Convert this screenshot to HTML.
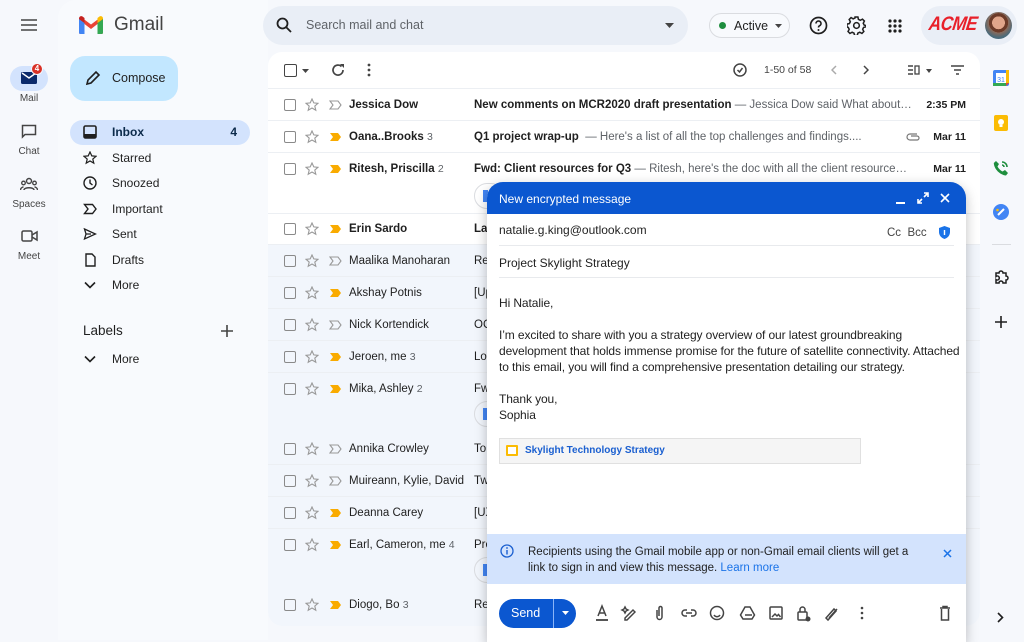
<!DOCTYPE html>
<html><head><meta charset="utf-8"><style>
*{box-sizing:border-box;margin:0;padding:0}
body{width:1024px;height:640px;overflow:hidden;background:#f6f8fc;font-family:"Liberation Sans",Arial,sans-serif;color:#1f1f1f;position:relative}
.a{position:absolute}
.rail{position:absolute;left:0;width:58px;text-align:center;font-size:10px;color:#444}
.menu .it{position:absolute;left:70px;width:180px;height:25px;border-radius:13px;font-size:12px;color:#1f1f1f;line-height:25px;padding-left:42px}
.menu svg{position:absolute;left:13px;top:5px}
.card{position:absolute;left:268px;top:52px;width:712px;height:574px;background:#fff;border-radius:14px;overflow:hidden}
.row{position:absolute;left:0;width:712px;height:32px;border-bottom:1px solid #eceff3;font-size:11.5px;line-height:32px}
.row.rd{background:#f2f6fc}
.cb{position:absolute;left:16px;top:10px;width:12px;height:12px;border:1.6px solid #8a8a8a;border-radius:2px}
.st{position:absolute;left:37px;top:9px}
.imp{position:absolute;left:61px;top:11px}
.nm{position:absolute;left:81px}
.sb{position:absolute;left:206px;white-space:nowrap}
.dt{position:absolute;right:14px;font-weight:bold;font-size:10.5px}
.b{font-weight:bold}
.g{color:#5f6368}
.chip{position:absolute;left:206px;width:30px;height:26px;border:1px solid #dadce0;border-radius:13px}
.chip i{position:absolute;left:8px;top:6px;width:5px;height:12px;background:#4285f4}
.tb svg{position:absolute}
</style></head><body>

<svg class="a" style="left:20px;top:18px" width="18" height="14"><path d="M1 2h16M1 7h16M1 12h16" stroke="#444" stroke-width="1.6"/></svg>
<div class="a" style="left:10px;top:66px;width:38px;height:25px;border-radius:13px;background:#d3e3fd"></div>
<svg class="a" style="left:21px;top:72px" width="16" height="12"><rect x="0" y="0" width="16" height="12" rx="1.5" fill="#0b2a6b"/><path d="M1 1l7 5 7-5" stroke="#fff" stroke-width="1.4" fill="none"/></svg>
<div class="a" style="left:31px;top:63px;width:12px;height:12px;border-radius:6px;background:#d93025;border:1.5px solid #f6f8fc;color:#fff;font-size:8px;line-height:9px;text-align:center;font-weight:bold">4</div>
<div class="rail" style="top:93px">Mail</div>
<svg class="a" style="left:21px;top:124px" width="16" height="15"><path d="M1.5 1.5h13v9H4l-2.5 2.5z" stroke="#444" stroke-width="1.5" fill="none"/></svg>
<div class="rail" style="top:146px">Chat</div>
<svg class="a" style="left:20px;top:177px" width="18" height="14"><circle cx="9" cy="4" r="2.5" stroke="#444" stroke-width="1.4" fill="none"/><circle cx="3.5" cy="6" r="1.8" stroke="#444" stroke-width="1.3" fill="none"/><circle cx="14.5" cy="6" r="1.8" stroke="#444" stroke-width="1.3" fill="none"/><path d="M4 13c0-3 10-3 10 0M0.5 13c0-2 2-3 3-3M17.5 13c0-2-2-3-3-3" stroke="#444" stroke-width="1.4" fill="none"/></svg>
<div class="rail" style="top:199px">Spaces</div>
<svg class="a" style="left:21px;top:230px" width="17" height="12"><rect x="1" y="1" width="10" height="10" rx="1.5" stroke="#444" stroke-width="1.5" fill="none"/><path d="M11 5l5-3v8l-5-3" stroke="#444" stroke-width="1.5" fill="none"/></svg>
<div class="rail" style="top:251px">Meet</div>

<div class="a" style="left:58px;top:0;width:210px;height:640px;background:#f8fafd;border-radius:18px 0 0 0"></div>
<svg class="a" style="left:79px;top:16px" width="24" height="18" viewBox="0 0 24 18"><path d="M0 3v13.5A1.5 1.5 0 0 0 1.5 18H5.5V8l6.5 5 6.5-5v10h4A1.5 1.5 0 0 0 24 16.5V3l-2-2-10 7.5L2 1z" fill="#ea4335"/><path d="M0 3v13.5A1.5 1.5 0 0 0 1.5 18H5.5V7z" fill="#4285f4"/><path d="M18.5 7v11h4A1.5 1.5 0 0 0 24 16.5V3z" fill="#34a853"/><path d="M24 3V2.5C24 .6 21.8-.5 20.3.6L18.5 2v5z" fill="#fbbc04"/><path d="M0 3v-.5C0 .6 2.2-.5 3.7.6L5.5 2v5z" fill="#c5221f"/></svg>
<div class="a" style="left:114px;top:14px;font-size:19px;color:#444">Gmail</div>
<div class="a" style="left:70px;top:56px;width:108px;height:45px;border-radius:15px;background:#c2e7ff"></div>
<svg class="a" style="left:85px;top:70px" width="16" height="16"><path d="M2 14l1-4 8-8 3 3-8 8z" stroke="#1f1f1f" stroke-width="1.6" fill="none"/></svg>
<div class="a" style="left:112px;top:71px;font-size:12.5px;color:#1f1f1f">Compose</div>
<div class="menu">
<div class="it" style="top:120px;background:#d3e3fd;font-weight:bold;color:#0b2a4a"><svg width="14" height="14"><rect x="1" y="1" width="12" height="12" rx="1.5" stroke="#1f1f1f" stroke-width="1.6" fill="none"/><rect x="1" y="9" width="12" height="4" fill="#1f1f1f"/></svg>Inbox<span style="position:absolute;right:13px">4</span></div>
<div class="it" style="top:146px"><svg width="14" height="14"><path d="M7 1l1.8 3.9 4.2.4-3.2 2.8 1 4.1L7 10l-3.8 2.2 1-4.1L1 5.3l4.2-.4z" stroke="#1f1f1f" stroke-width="1.2" fill="none"/></svg>Starred</div>
<div class="it" style="top:171px"><svg width="14" height="14"><circle cx="7" cy="7" r="6" stroke="#1f1f1f" stroke-width="1.4" fill="none"/><path d="M7 3.5V7l2.5 2" stroke="#1f1f1f" stroke-width="1.4" fill="none"/></svg>Snoozed</div>
<div class="it" style="top:197px"><svg width="14" height="14"><path d="M1.5 2.5h8l3.5 4.5-3.5 4.5h-8l3.5-4.5z" stroke="#1f1f1f" stroke-width="1.4" fill="none"/></svg>Important</div>
<div class="it" style="top:222px"><svg width="14" height="14"><path d="M1.5 2l11 5-11 5 1.5-5z M3 7h5" stroke="#1f1f1f" stroke-width="1.3" fill="none"/></svg>Sent</div>
<div class="it" style="top:248px"><svg width="14" height="14"><path d="M3 1h6l3 3v9H3z" stroke="#1f1f1f" stroke-width="1.4" fill="none"/></svg>Drafts</div>
<div class="it" style="top:273px"><svg width="14" height="14"><path d="M2 4.5l5 5 5-5" stroke="#1f1f1f" stroke-width="1.6" fill="none"/></svg>More</div>
<div class="a" style="left:83px;top:323px;font-size:13.5px;color:#1f1f1f">Labels</div>
<svg class="a" style="left:221px;top:325px" width="12" height="12"><path d="M6 0v12M0 6h12" stroke="#444" stroke-width="1.6"/></svg>
<div class="it" style="top:347px"><svg width="14" height="14"><path d="M2 4.5l5 5 5-5" stroke="#1f1f1f" stroke-width="1.6" fill="none"/></svg>More</div>
</div>

<div class="a" style="left:263px;top:6px;width:425px;height:39px;border-radius:20px;background:#e9eef6"></div>
<svg class="a" style="left:276px;top:17px" width="16" height="16"><circle cx="6.5" cy="6.5" r="5" stroke="#1f1f1f" stroke-width="1.8" fill="none"/><path d="M10.5 10.5l4.5 4.5" stroke="#1f1f1f" stroke-width="1.8"/></svg>
<div class="a" style="left:306px;top:18px;font-size:12.5px;color:#5f6368">Search mail and chat</div>
<svg class="a" style="left:665px;top:23px" width="9" height="5"><path d="M0 0h9L4.5 5z" fill="#444"/></svg>
<div class="a" style="left:709px;top:13px;width:81px;height:25px;border:1px solid #dadce0;border-radius:13px;background:#f8fafd"></div>
<div class="a" style="left:719px;top:22px;width:7px;height:7px;border-radius:4px;background:#1e8e3e"></div>
<div class="a" style="left:734px;top:19px;font-size:12.5px;color:#1f1f1f">Active</div>
<svg class="a" style="left:775px;top:24px" width="7" height="4"><path d="M0 0h7L3.5 4z" fill="#444"/></svg>
<svg class="a" style="left:809px;top:16px" width="19" height="19"><circle cx="9.5" cy="9.5" r="8" stroke="#1f1f1f" stroke-width="1.7" fill="none"/><path d="M7 7.5a2.5 2.5 0 1 1 3.5 2.3c-.8.4-1 .9-1 1.7" stroke="#1f1f1f" stroke-width="1.6" fill="none"/><circle cx="9.5" cy="14" r="1" fill="#1f1f1f"/></svg>
<svg class="a" style="left:847px;top:16px" width="19" height="19" viewBox="0 0 20 20"><path d="M8.5 1h3l.5 2.5 2 1 2.3-1.2 2 2-1.2 2.3 1 2L20 10v0l-.1 1.5-2.4.5-1 2 1.2 2.3-2 2-2.3-1.2-2 1-.5 2.4h-3l-.5-2.4-2-1-2.3 1.2-2-2 1.2-2.3-1-2L0 11.5v-3l2.5-.5 1-2L2.3 3.7l2-2L6.5 3l2-1z" stroke="#1f1f1f" stroke-width="1.6" fill="none"/><circle cx="10" cy="10" r="3" stroke="#1f1f1f" stroke-width="1.6" fill="none"/></svg>
<svg class="a" style="left:888px;top:19px" width="14" height="14"><g fill="#1f1f1f"><circle cx="2" cy="2" r="1.6"/><circle cx="7" cy="2" r="1.6"/><circle cx="12" cy="2" r="1.6"/><circle cx="2" cy="7" r="1.6"/><circle cx="7" cy="7" r="1.6"/><circle cx="12" cy="7" r="1.6"/><circle cx="2" cy="12" r="1.6"/><circle cx="7" cy="12" r="1.6"/><circle cx="12" cy="12" r="1.6"/></g></svg>
<div class="a" style="left:921px;top:6px;width:96px;height:39px;border-radius:20px;background:#e9eef6"></div>
<div class="a" style="left:929px;top:14px;font-size:17px;font-weight:bold;font-style:italic;color:#e8202a;letter-spacing:-0.5px;transform:skewX(-8deg) scaleY(1.15)">ACME</div>
<div class="a" style="left:985px;top:12px;width:27px;height:27px;border-radius:14px;background:radial-gradient(circle at 50% 40%,#e0a58a 0 30%,#6b3a28 31% 45%,#8a6a5a 46%,#4a6a7a 70%)"></div>

<svg class="a" style="left:993px;top:70px" width="16" height="16"><rect x="0" y="0" width="16" height="16" rx="2" fill="#4285f4"/><rect x="3" y="3" width="10" height="10" fill="#fff"/><text x="8" y="12" font-size="7" text-anchor="middle" fill="#4285f4" font-family="Liberation Sans">31</text><rect x="0" y="13" width="13" height="3" fill="#34a853"/><rect x="13" y="0" width="3" height="13" fill="#fbbc04"/><path d="M13 13h3l-3 3z" fill="#ea4335"/></svg>
<svg class="a" style="left:994px;top:115px" width="14" height="16"><rect width="14" height="16" rx="2" fill="#fbbc04"/><circle cx="7" cy="7" r="3" fill="#fff"/><rect x="5.5" y="10" width="3" height="2" fill="#fff"/></svg>
<svg class="a" style="left:993px;top:160px" width="16" height="16"><path d="M3 1l3 3-1.5 2.5c1 2 3 4 5 5L12 10l3 3-2 2.5C7 15 1 9 .8 3z" fill="#1e8e3e"/><path d="M9 2a5 5 0 0 1 5 5M9 5a2 2 0 0 1 2 2" stroke="#1e8e3e" stroke-width="1.6" fill="none"/></svg>
<svg class="a" style="left:993px;top:204px" width="16" height="16"><circle cx="8" cy="8" r="8" fill="#4285f4"/><path d="M5 11l6-6" stroke="#fff" stroke-width="2"/><circle cx="4.5" cy="6" r="1.3" fill="#fbbc04"/></svg>
<div class="a" style="left:992px;top:244px;width:19px;height:1px;background:#dadce0"></div>
<svg class="a" style="left:994px;top:269px" width="15" height="16"><path d="M2 4h3a2 2 0 1 1 4 0h3v3a2 2 0 1 1 0 4v3H9a2 2 0 1 0-4 0H2v-3.5a2 2 0 1 0 0-3z" stroke="#1f1f1f" stroke-width="1.5" fill="none"/></svg>
<svg class="a" style="left:995px;top:316px" width="12" height="12"><path d="M6 0v12M0 6h12" stroke="#1f1f1f" stroke-width="1.6"/></svg>
<svg class="a" style="left:997px;top:612px" width="7" height="11"><path d="M1 1l4.5 4.5L1 10" stroke="#1f1f1f" stroke-width="1.6" fill="none"/></svg>

<div class="card">
 <div class="tb">
  <div class="a" style="left:16px;top:12px;width:13px;height:13px;border:1.8px solid #444;border-radius:2px"></div>
  <svg style="left:34px;top:17px" width="7" height="4"><path d="M0 0h7L3.5 4z" fill="#444"/></svg>
  <svg style="left:63px;top:11px" width="14" height="14"><path d="M12 7A5 5 0 1 1 10.5 3.5" stroke="#444" stroke-width="1.7" fill="none"/><path d="M9 1h4v4z" fill="#444"/></svg>
  <svg style="left:99px;top:11px" width="4" height="14"><circle cx="2" cy="2" r="1.4" fill="#444"/><circle cx="2" cy="7" r="1.4" fill="#444"/><circle cx="2" cy="12" r="1.4" fill="#444"/></svg>
  <svg style="left:465px;top:11px" width="14" height="14"><circle cx="7" cy="7" r="6" stroke="#444" stroke-width="1.5" fill="none"/><path d="M4.5 7l2 2 3-4" stroke="#444" stroke-width="1.5" fill="none"/></svg>
  <div class="a" style="left:496px;top:12px;font-size:10.5px;color:#444">1-50 of 58</div>
  <svg style="left:563px;top:13px" width="6" height="10"><path d="M5 1L1 5l4 4" stroke="#aaa" stroke-width="1.5" fill="none"/></svg>
  <svg style="left:595px;top:13px" width="6" height="10"><path d="M1 1l4 4-4 4" stroke="#444" stroke-width="1.5" fill="none"/></svg>
  <svg style="left:640px;top:13px" width="12" height="10"><path d="M0 1h5M0 5h5M0 9h5" stroke="#444" stroke-width="1.5"/><rect x="7" y="1" width="4" height="8" stroke="#444" stroke-width="1.3" fill="none"/></svg>
  <svg style="left:658px;top:17px" width="6" height="4"><path d="M0 0h6L3 4z" fill="#444"/></svg>
  <svg style="left:683px;top:13px" width="13" height="10"><path d="M0 1h13M3 5h7M5 9h3" stroke="#444" stroke-width="1.5"/></svg>
 </div>
 <div class="a" style="left:0;top:36px;width:712px;height:1px;background:#eceff3"></div>
 <div class="row" style="top:37px"><div class="cb"></div><svg class="st" width="14" height="14"><path d="M7 1l1.8 3.9 4.2.4-3.2 2.8 1 4.1L7 10l-3.8 2.2 1-4.1L1 5.3l4.2-.4z" stroke="#999" stroke-width="1.1" fill="none"/></svg><svg class="imp" width="13" height="10"><path d="M1 1h8l3 4-3 4H1l3-4z" stroke="#999" stroke-width="1.1" fill="none"/></svg><span class="nm b">Jessica Dow</span><span class="sb"><b>New comments on MCR2020 draft presentation</b> <span class="g">— Jessica Dow said What about…</span></span><span class="dt">2:35 PM</span></div>
 <div class="row" style="top:69px"><div class="cb"></div><svg class="st" width="14" height="14"><path d="M7 1l1.8 3.9 4.2.4-3.2 2.8 1 4.1L7 10l-3.8 2.2 1-4.1L1 5.3l4.2-.4z" stroke="#999" stroke-width="1.1" fill="none"/></svg><svg class="imp" width="13" height="10"><path d="M1 1h8l3 4-3 4H1l3-4z" fill="#f9ab00"/></svg><span class="nm"><b>Oana..Brooks</b> <span class="g" style="font-size:10.5px">3</span></span><span class="sb"><b>Q1 project wrap-up</b>&nbsp; <span class="g">— Here's a list of all the top challenges and findings....</span></span><svg class="a" style="left:638px;top:12px" width="14" height="8"><path d="M11 1H4a3 3 0 0 0 0 6h7a2 2 0 0 0 0-4H5" stroke="#777" stroke-width="1.2" fill="none"/></svg><span class="dt">Mar 11</span></div>
 <div class="row" style="top:101px;height:61px"><div class="cb"></div><svg class="st" width="14" height="14"><path d="M7 1l1.8 3.9 4.2.4-3.2 2.8 1 4.1L7 10l-3.8 2.2 1-4.1L1 5.3l4.2-.4z" stroke="#999" stroke-width="1.1" fill="none"/></svg><svg class="imp" width="13" height="10"><path d="M1 1h8l3 4-3 4H1l3-4z" fill="#f9ab00"/></svg><span class="nm"><b>Ritesh, Priscilla</b> <span class="g" style="font-size:10.5px">2</span></span><span class="sb"><b>Fwd: Client resources for Q3</b> <span class="g">— Ritesh, here's the doc with all the client resource…</span></span><span class="dt">Mar 11</span><div class="chip" style="top:30px"><i></i></div></div>
 <div class="row" style="top:161px"><div class="cb"></div><svg class="st" width="14" height="14"><path d="M7 1l1.8 3.9 4.2.4-3.2 2.8 1 4.1L7 10l-3.8 2.2 1-4.1L1 5.3l4.2-.4z" stroke="#999" stroke-width="1.1" fill="none"/></svg><svg class="imp" width="13" height="10"><path d="M1 1h8l3 4-3 4H1l3-4z" fill="#f9ab00"/></svg><span class="nm b">Erin Sardo</span><span class="sb b">La</span></div>
 <div class="row rd" style="top:193px"><div class="cb"></div><svg class="st" width="14" height="14"><path d="M7 1l1.8 3.9 4.2.4-3.2 2.8 1 4.1L7 10l-3.8 2.2 1-4.1L1 5.3l4.2-.4z" stroke="#999" stroke-width="1.1" fill="none"/></svg><svg class="imp" width="13" height="10"><path d="M1 1h8l3 4-3 4H1l3-4z" stroke="#999" stroke-width="1.1" fill="none"/></svg><span class="nm">Maalika Manoharan</span><span class="sb">Re</span></div>
 <div class="row rd" style="top:225px"><div class="cb"></div><svg class="st" width="14" height="14"><path d="M7 1l1.8 3.9 4.2.4-3.2 2.8 1 4.1L7 10l-3.8 2.2 1-4.1L1 5.3l4.2-.4z" stroke="#999" stroke-width="1.1" fill="none"/></svg><svg class="imp" width="13" height="10"><path d="M1 1h8l3 4-3 4H1l3-4z" fill="#f9ab00"/></svg><span class="nm">Akshay Potnis</span><span class="sb">[Up</span></div>
 <div class="row rd" style="top:257px"><div class="cb"></div><svg class="st" width="14" height="14"><path d="M7 1l1.8 3.9 4.2.4-3.2 2.8 1 4.1L7 10l-3.8 2.2 1-4.1L1 5.3l4.2-.4z" stroke="#999" stroke-width="1.1" fill="none"/></svg><svg class="imp" width="13" height="10"><path d="M1 1h8l3 4-3 4H1l3-4z" stroke="#999" stroke-width="1.1" fill="none"/></svg><span class="nm">Nick Kortendick</span><span class="sb">OC</span></div>
 <div class="row rd" style="top:289px"><div class="cb"></div><svg class="st" width="14" height="14"><path d="M7 1l1.8 3.9 4.2.4-3.2 2.8 1 4.1L7 10l-3.8 2.2 1-4.1L1 5.3l4.2-.4z" stroke="#999" stroke-width="1.1" fill="none"/></svg><svg class="imp" width="13" height="10"><path d="M1 1h8l3 4-3 4H1l3-4z" fill="#f9ab00"/></svg><span class="nm">Jeroen, me <span class="g" style="font-size:10.5px">3</span></span><span class="sb">Lo</span></div>
 <div class="row rd" style="top:321px;height:61px"><div class="cb"></div><svg class="st" width="14" height="14"><path d="M7 1l1.8 3.9 4.2.4-3.2 2.8 1 4.1L7 10l-3.8 2.2 1-4.1L1 5.3l4.2-.4z" stroke="#999" stroke-width="1.1" fill="none"/></svg><svg class="imp" width="13" height="10"><path d="M1 1h8l3 4-3 4H1l3-4z" fill="#f9ab00"/></svg><span class="nm">Mika, Ashley <span class="g" style="font-size:10.5px">2</span></span><span class="sb">Fw</span><div class="chip" style="top:28px"><i></i></div></div>
 <div class="row rd" style="top:381px"><div class="cb"></div><svg class="st" width="14" height="14"><path d="M7 1l1.8 3.9 4.2.4-3.2 2.8 1 4.1L7 10l-3.8 2.2 1-4.1L1 5.3l4.2-.4z" stroke="#999" stroke-width="1.1" fill="none"/></svg><svg class="imp" width="13" height="10"><path d="M1 1h8l3 4-3 4H1l3-4z" stroke="#999" stroke-width="1.1" fill="none"/></svg><span class="nm">Annika Crowley</span><span class="sb">To</span></div>
 <div class="row rd" style="top:413px"><div class="cb"></div><svg class="st" width="14" height="14"><path d="M7 1l1.8 3.9 4.2.4-3.2 2.8 1 4.1L7 10l-3.8 2.2 1-4.1L1 5.3l4.2-.4z" stroke="#999" stroke-width="1.1" fill="none"/></svg><svg class="imp" width="13" height="10"><path d="M1 1h8l3 4-3 4H1l3-4z" stroke="#999" stroke-width="1.1" fill="none"/></svg><span class="nm">Muireann, Kylie, David</span><span class="sb">Tw</span></div>
 <div class="row rd" style="top:445px"><div class="cb"></div><svg class="st" width="14" height="14"><path d="M7 1l1.8 3.9 4.2.4-3.2 2.8 1 4.1L7 10l-3.8 2.2 1-4.1L1 5.3l4.2-.4z" stroke="#999" stroke-width="1.1" fill="none"/></svg><svg class="imp" width="13" height="10"><path d="M1 1h8l3 4-3 4H1l3-4z" fill="#f9ab00"/></svg><span class="nm">Deanna Carey</span><span class="sb">[UX</span></div>
 <div class="row rd" style="top:477px;height:61px"><div class="cb"></div><svg class="st" width="14" height="14"><path d="M7 1l1.8 3.9 4.2.4-3.2 2.8 1 4.1L7 10l-3.8 2.2 1-4.1L1 5.3l4.2-.4z" stroke="#999" stroke-width="1.1" fill="none"/></svg><svg class="imp" width="13" height="10"><path d="M1 1h8l3 4-3 4H1l3-4z" fill="#f9ab00"/></svg><span class="nm">Earl, Cameron, me <span class="g" style="font-size:10.5px">4</span></span><span class="sb">Pro</span><div class="chip" style="top:28px"><i></i></div></div>
 <div class="row rd" style="top:537px;border:0;height:37px"><div class="cb"></div><svg class="st" width="14" height="14"><path d="M7 1l1.8 3.9 4.2.4-3.2 2.8 1 4.1L7 10l-3.8 2.2 1-4.1L1 5.3l4.2-.4z" stroke="#999" stroke-width="1.1" fill="none"/></svg><svg class="imp" width="13" height="10"><path d="M1 1h8l3 4-3 4H1l3-4z" fill="#f9ab00"/></svg><span class="nm">Diogo, Bo <span class="g" style="font-size:10.5px">3</span></span><span class="sb">Re</span></div>
</div>

<div class="a" style="left:487px;top:182px;width:479px;height:460px;background:#fff;border-radius:16px 16px 0 0;box-shadow:0 4px 12px rgba(0,0,0,.25);overflow:hidden">
 <div class="a" style="left:0;top:0;width:479px;height:32px;background:#0b57d0"></div>
 <div class="a" style="left:12px;top:10px;font-size:12px;color:#fff">New encrypted message</div>
 <div class="a" style="left:409px;top:20px;width:9px;height:2px;background:#fff"></div>
 <svg class="a" style="left:430px;top:10px" width="12" height="12"><path d="M7 1h4v4M11 1L7 5M5 11H1V7M1 11l4-4" stroke="#fff" stroke-width="1.6" fill="none"/></svg>
 <svg class="a" style="left:453px;top:11px" width="10" height="10"><path d="M1 1l8 8M9 1L1 9" stroke="#fff" stroke-width="1.6"/></svg>
 <div class="a" style="left:12px;top:41px;font-size:12px">natalie.g.king@outlook.com</div>
 <div class="a" style="left:400px;top:45px;font-size:11.5px;color:#444">Cc&nbsp; Bcc</div>
 <svg class="a" style="left:452px;top:44px" width="11" height="13"><path d="M5.5 0L11 2v4c0 3.5-2.5 6-5.5 7C2.5 12 0 9.5 0 6V2z" fill="#1a73e8"/><rect x="4.8" y="4" width="1.4" height="5" fill="#fff"/></svg>
 <div class="a" style="left:12px;top:63px;width:455px;height:1px;background:#e8eaed"></div>
 <div class="a" style="left:12px;top:74px;font-size:12px">Project Skylight Strategy</div>
 <div class="a" style="left:12px;top:95px;width:455px;height:1px;background:#e8eaed"></div>
 <div class="a" style="left:12px;top:113px;font-size:12px;line-height:16px;width:470px;white-space:nowrap;letter-spacing:-0.1px">Hi Natalie,<br><br>I’m excited to share with you a strategy overview of our latest groundbreaking<br>development that holds immense promise for the future of satellite connectivity. Attached<br>to this email, you will find a comprehensive presentation detailing our strategy.<br><br>Thank you,<br>Sophia</div>
 <div class="a" style="left:12px;top:256px;width:362px;height:26px;background:#f5f5f5;border:1px solid #e0e0e0"></div>
 <div class="a" style="left:19px;top:263px;width:12px;height:11px;border:2.5px solid #fbbc04;border-radius:1px;background:#fff"></div>
 <div class="a" style="left:38px;top:263px;font-size:10px;font-weight:bold;color:#1a5fd0">Skylight Technology Strategy</div>
 <div class="a" style="left:0;top:352px;width:479px;height:50px;background:#d3e3fd"></div>
 <svg class="a" style="left:13px;top:362px" width="14" height="14"><circle cx="7" cy="7" r="6" stroke="#1a5fd0" stroke-width="1.3" fill="none"/><rect x="6.3" y="6" width="1.4" height="4.5" fill="#1a5fd0"/><circle cx="7" cy="4" r=".9" fill="#1a5fd0"/></svg>
 <div class="a" style="left:41px;top:362px;font-size:11.5px;line-height:16px;width:400px;color:#1f1f1f">Recipients using the Gmail mobile app or non-Gmail email clients will get a link to sign in and view this message. <span style="color:#1a73e8">Learn more</span></div>
 <svg class="a" style="left:456px;top:367px" width="9" height="9"><path d="M1 1l7 7M8 1L1 8" stroke="#1a73e8" stroke-width="1.5"/></svg>
 <div class="a" style="left:12px;top:417px;width:77px;height:29px;border-radius:15px;background:#0b57d0"></div>
 <div class="a" style="left:66px;top:417px;width:1px;height:29px;background:#8ab4f8"></div>
 <div class="a" style="left:24px;top:424px;font-size:12.5px;color:#fff">Send</div>
 <svg class="a" style="left:75px;top:429px" width="7" height="4"><path d="M0 0h7L3.5 4z" fill="#fff"/></svg>
 <svg class="a" style="left:108px;top:422px" width="370" height="18">
  <g stroke="#444" stroke-width="1.5" fill="none">
   <path d="M3 12L7 2l4 10M4.5 9h5"/><path d="M1 16h12" stroke-width="1.8"/>
   <path d="M30 14l8-8 2 2-8 8h-2z M30 3l1 2 2 1-2 1-1 2-1-2-2-1 2-1z"/>
   <path d="M62 6v7a2.5 2.5 0 0 0 5 0V4a1.5 1.5 0 0 0-3 0v8"/>
   <path d="M92 6h-2a3 3 0 0 0 0 6h2M96 6h2a3 3 0 0 1 0 6h-2M91 9h6"/>
   <circle cx="122" cy="9" r="6.5"/><path d="M119 11a3.5 3.5 0 0 0 6 0"/>
   <path d="M150 3h5l4.5 8-2.5 4h-9l-2.5-4z M150 11h7"/>
   <rect x="175" y="3" width="12" height="12" rx="1"/><path d="M177 13l3-3 2 2 1.5-1.5 2 2.5"/>
   <rect x="203" y="8" width="9" height="8" rx="1"/><path d="M205 8V5.5a2.5 2.5 0 0 1 5 0V8"/>
   <path d="M231 14l8-9 2 2-8 9zM234 14l8-9"/>
  </g>
  <circle cx="213" cy="15" r="2.5" fill="#444"/>
  <g fill="#444"><circle cx="267" cy="4" r="1.3"/><circle cx="267" cy="9" r="1.3"/><circle cx="267" cy="14" r="1.3"/></g>
  <path d="M345 4h10M348 4V2.5h4V4M346.5 5v11h7V5" stroke="#444" stroke-width="1.5" fill="none"/>
 </svg>
</div>
</body></html>
